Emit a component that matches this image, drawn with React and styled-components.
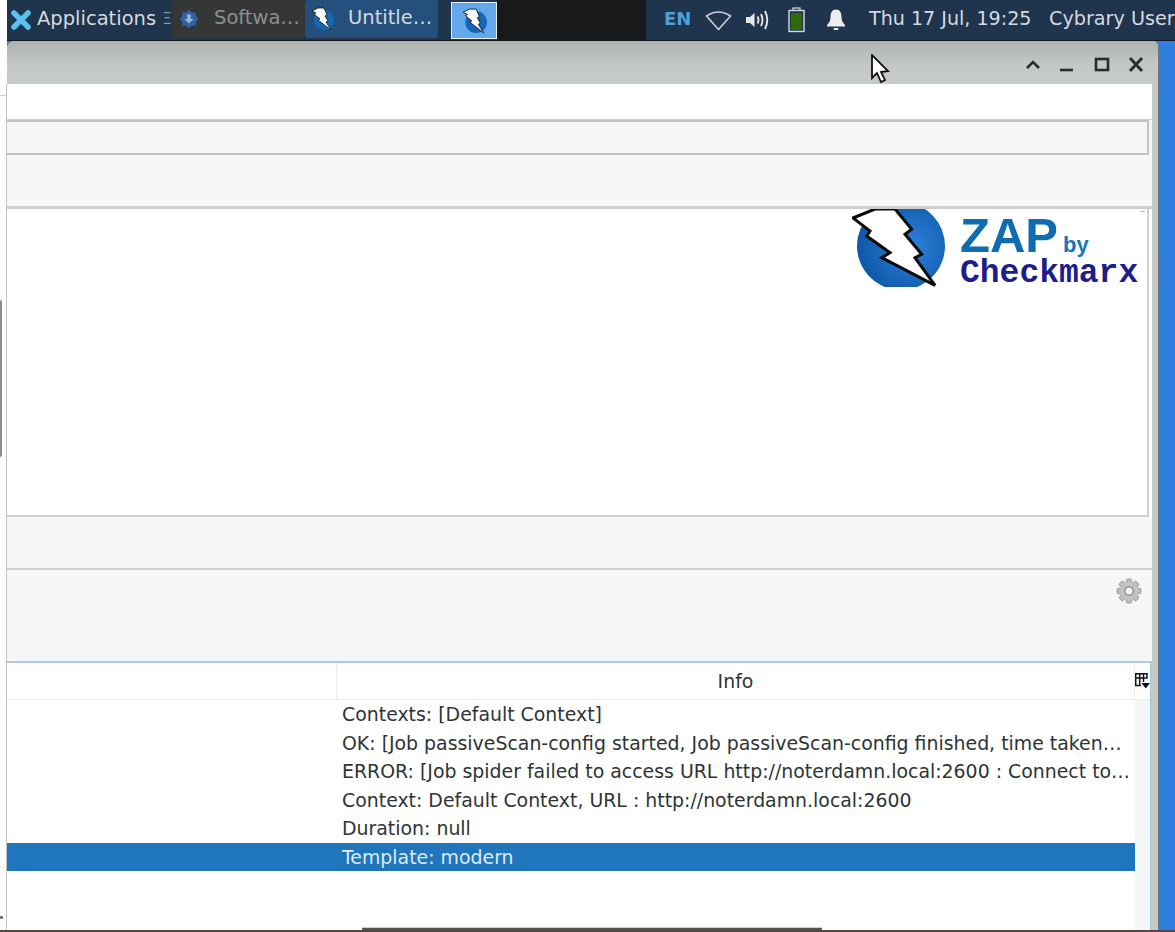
import React from 'react'
import styled, {createGlobalStyle} from 'styled-components'

const Global = createGlobalStyle`
  html, body {
    margin: 0;
    padding: 0;
    height: 100%;
    overflow: hidden;
    background: #2f7fe0;
    font-family: "DejaVu Sans", sans-serif;
  }
  #root {
    height: 100%;
  }
`

const Screen = styled.div`
  width: 1175px;
  height: 932px;
  display: flex;
  background: #2f7fe0;
  overflow: hidden;
  position: relative;
`

const Gutter = styled.div`
  width: 7px;
  flex: none;
  display: flex;
  flex-direction: column;
  background: #fff;
  position: relative;
`

const GutterTop = styled.div`
  height: 84px;
  flex: none;
`

const GutterBody = styled.div`
  flex: 1;
  background: #fdfdfd;
  border-right: 1px solid #c3c3c3;
`

const GutterLine = styled.div`
  height: 1px;
  margin-top: 11px;
  background: #cfcfcf;
`

const GutterHandle = styled.div`
  position: absolute;
  left: 0;
  top: 300px;
  width: 2px;
  height: 157px;
  background: #8b8b8b;
  border-radius: 0 2px 2px 0;
`

const GutterMark = styled.div`
  position: absolute;
  left: 0;
  top: 916px;
  width: 3px;
  height: 3px;
  background: #777;
`

const Main = styled.div`
  flex: 1;
  min-width: 0;
  display: flex;
  flex-direction: column;
`

const Panel = styled.div`
  height: 40px;
  flex: none;
  display: flex;
  align-items: center;
  background: #1f344d;
  border-bottom: 1px solid #14181d;
  color: #d6dade;
  white-space: nowrap;
  overflow: hidden;
`

const PanelLabel = styled.span`
  font-size: 19.5px;
  padding-bottom: 3px;
`

const AppMenu = styled.div`
  display: flex;
  flex: none;
  align-items: center;
  gap: 5px;
  width: 162px;
  padding-left: 3px;
`

const Separator = styled(PanelLabel)`
  color: #8a96a3;
  font-size: 15px;
  margin-left: 1px;
`

const Task = styled.div`
  width: 133px;
  height: 38px;
  flex: none;
  align-self: flex-start;
  display: flex;
  align-items: center;
  gap: 14px;
  padding-left: ${({$pad}) => $pad}px;
  box-sizing: border-box;
  background: ${({$active}) => ($active ? '#25507d' : '#353737')};
  color: ${({$active}) => ($active ? '#d6dade' : '#8b8f91')};
  border-radius: 3px;
`

const Pager = styled.div`
  width: 46px;
  height: 37px;
  flex: none;
  margin-left: 13px;
  align-self: flex-start;
  margin-top: 2px;
  box-sizing: border-box;
  border: 1px solid #e8f0f8;
  background: #62a8ea;
  display: flex;
  align-items: center;
  justify-content: center;
`

const BlackGap = styled.div`
  width: 149px;
  flex: none;
  height: 100%;
  background: #17191b;
`

const Tray = styled.div`
  display: flex;
  flex: none;
  align-items: center;
  height: 100%;
  padding-left: 18px;
`

const Lang = styled(PanelLabel)`
  color: #4f9fd8;
  font-weight: 700;
  font-size: 18px;
  width: 41px;
`

const TrayIcon = styled.div`
  width: ${({$width}) => $width}px;
  display: flex;
  align-items: center;
  justify-content: flex-start;
`

const Clock = styled(PanelLabel)`
  margin-left: 19px;
  width: 180px;
  font-size: 19.1px;
`

const User = styled(PanelLabel)`
  font-size: 19.2px;
`

const Desktop = styled.div`
  flex: 1;
  display: flex;
  min-height: 0;
`

const Window = styled.div`
  width: 1151px;
  height: 100%;
  display: flex;
  flex-direction: column;
  background: #c6cac6;
  border-top-left-radius: 8px;
  border-top-right-radius: 6px;
  border-right: 1px solid #70757a;
`

const TitleBar = styled.div`
  height: 43px;
  flex: none;
  box-sizing: border-box;
  display: flex;
  align-items: center;
  justify-content: flex-end;
  gap: 14.5px;
  padding: 5px 12px 0 0;
  border-top-left-radius: 8px;
  border-top-right-radius: 6px;
  background: linear-gradient(#aeb2ae, #c4c8c4 55%, #c7cbc7);
`

const WinButton = styled.svg`
  width: 20px;
  height: 20px;
  display: block;
`

const Content = styled.div`
  flex: 1;
  min-height: 0;
  margin-right: 6px;
  display: flex;
  flex-direction: column;
  background: #f6f6f6;
`

const WhiteBand = styled.div`
  height: 35px;
  flex: none;
  background: #fff;
  border-bottom: 1px solid #cfcfcf;
`

const InputField = styled.div`
  height: 31px;
  flex: none;
  margin-right: 3px;
  background: #f6f6f6;
  border: 2px solid #c2c2c2;
  border-left: none;
`

const GreyBand = styled.div`
  height: ${({$height}) => $height}px;
  flex: none;
  background: #f6f6f6;
  border-bottom: ${({$line}) => $line}px solid #cfcfcf;
`

const Banner = styled.div`
  height: 306px;
  flex: none;
  background: #fff;
  border-right: 2px solid #cfd2cf;
  margin-right: 3px;
  box-shadow: 3px 0 0 #fff;
  border-bottom: 2px solid #cfcfcf;
  display: flex;
  justify-content: flex-end;
  align-items: flex-start;
  padding-right: 7px;
  position: relative;
`

const ScrollDash = styled.div`
  position: absolute;
  right: 2px;
  top: 2px;
  width: 5px;
  height: 1px;
  background: #b5b5b5;
`

const LogoBox = styled.div`
  display: flex;
  gap: 12px;
  height: 78px;
`

const LogoText = styled.div`
  display: flex;
  flex-direction: column;
  padding-top: 2px;
  font-family: "Liberation Sans", sans-serif;
  font-weight: 700;
  width: 180px;
`

const ZapWord = styled.div`
  display: flex;
  align-items: baseline;
  color: #0e6db0;
  font-size: 49px;
  line-height: 48px;
  height: 48px;
  gap: 5px;

  span {
    font-size: 22px;
    line-height: 24px;
    color: #1478bb;
  }
`

const MakerWord = styled.div`
  margin-top: 2px;
  color: #1d1d8c;
  font-family: "Liberation Mono", monospace;
  font-size: 33px;
  line-height: 26px;
`

const SettingsBand = styled.div`
  height: 91px;
  flex: none;
  box-sizing: border-box;
  display: flex;
  justify-content: flex-end;
  align-items: flex-start;
  padding: 8px 10px 0 0;
  background: #f6f6f6;
`

const TableWrap = styled.div`
  flex: 1;
  min-height: 0;
  display: flex;
  flex-direction: column;
  background: #fff;
  border-top: 2px solid #a9cbe4;
  border-right: 2px solid #a9cbe4;
  font-size: 18.9px;
  color: #2e3436;
`

const TableHead = styled.div`
  height: 37px;
  flex: none;
  box-sizing: border-box;
  display: grid;
  grid-template-columns: 330px 1fr 15px;
  border-bottom: 1px solid #ececec;
`

const HeadCell = styled.div`
  display: flex;
  align-items: center;
  justify-content: center;
  border-right: 1px solid #ececec;
`

const HeadCorner = styled.div`
  display: flex;
  align-items: center;
  justify-content: center;
`

const TableRows = styled.div`
  flex: 1;
  min-height: 0;
  display: grid;
  grid-template-columns: 1fr 15px;
`

const RowList = styled.div`
  display: flex;
  flex-direction: column;
`

const Row = styled.div`
  height: 28.5px;
  flex: none;
  box-sizing: border-box;
  padding-left: 335px;
  line-height: 28px;
  white-space: nowrap;
  background: ${({$selected}) => ($selected ? '#2076bd' : 'transparent')};
  color: ${({$selected}) => ($selected ? '#dcebf7' : '#2e3436')};
`

const ScrollTrack = styled.div`
  background: #f4f8f5;
`

const BottomBar = styled.div`
  position: absolute;
  left: 0;
  right: 0;
  bottom: 0;
  height: 2px;
  background: #5e4146;
`

const BottomHandle = styled.div`
  position: absolute;
  left: 362px;
  bottom: 2px;
  width: 460px;
  height: 2px;
  background: #555;
  border-top: 1px solid #cfcfcf;
`

const Cursor = styled.svg`
  position: absolute;
  left: 870px;
  top: 54px;
  width: 21px;
  height: 31px;
`

const XfceLogo = () => (
  <svg width="22" height="22" viewBox="0 0 22 22" fill="none" stroke="#5cc0ee" strokeWidth="5.500" strokeLinecap="round">
    <path d="M4 4 L18 18 M18 4 L4 18" />
  </svg>
)

const ZapBadge = ({size}) => (
  <svg width={size} height={size} viewBox="0 0 24 24">
    <circle cx="14" cy="13" r="10" fill="#1467b5" />
    <path
      d="M2 4 L8 1 L14 1 L17 8 L15 9 L18 14 L16 15 L21 23 L8 13 L10 12 L4 7 L6 6 Z"
      fill="#fff"
      stroke="#111"
      strokeWidth="0.8"
    />
  </svg>
)

const SoftwareIcon = () => (
  <svg width="22" height="22" viewBox="0 0 24 24">
    <path
      d="M12 2 L15 5 L19 4.500 L19.500 9 L22 12 L19.500 15 L19 19.500 L15 19 L12 22 L9 19 L5 19.500 L4.500 15 L2 12 L4.500 9 L5 4.500 L9 5 Z"
      fill="#2f63a8"
    />
    <path d="M10 7 H14 V12 H17 L12 17 L7 12 H10 Z" fill="#9fb4cc" />
  </svg>
)

const WifiIcon = () => (
  <svg width="27" height="22" viewBox="0 0 27 22" fill="none">
    <path d="M13.500 20.500 L1.500 7 Q13.500 -1 25.500 7 Z" stroke="#c9cdd1" strokeWidth="1.700" strokeLinejoin="round" />
  </svg>
)

const VolumeIcon = () => (
  <svg width="25" height="22" viewBox="0 0 25 22" fill="none">
    <path d="M1 8 H5 L9.500 4 V18 L5 14 H1 Z" fill="#e4e6e8" />
    <path d="M12.500 7.500 Q14.500 11 12.500 14.500 M16 5 Q19 11 16 17 M20 2 Q24.500 11 20 20" stroke="#e4e6e8" strokeWidth="1.900" />
  </svg>
)

const BatteryIcon = () => (
  <svg width="17" height="26" viewBox="0 0 17 26">
    <rect x="5" y="1" width="7" height="3" fill="none" stroke="#d8dcdc" strokeWidth="1.200" />
    <rect x="1" y="3.500" width="15" height="21" fill="#1f344d" stroke="#d8dcdc" strokeWidth="1.400" />
    <rect x="3" y="6" width="11" height="17" fill="#2f6a05" />
  </svg>
)

const BellIcon = () => (
  <svg width="20" height="24" viewBox="0 0 20 24">
    <path d="M10 1.500 C14 1.500 15.500 5 15.500 9 C15.500 13 17 15 19 17 V18.500 H1 V17 C3 15 4.500 13 4.500 9 C4.500 5 6 1.500 10 1.500 Z" fill="#eceeee" />
    <rect x="7.500" y="20" width="5" height="2" rx="1" fill="#eceeee" />
  </svg>
)

const GearIcon = () => (
  <svg width="26" height="26" viewBox="0 0 26 26">
    {[0, 45, 90, 135, 180, 225, 270, 315].map((angle) => (
      <rect
        key={angle}
        x="10.200"
        y="1"
        width="5.600"
        height="6"
        rx="1.500"
        fill="#bcbcbc"
        stroke="#939393"
        strokeWidth="0.800"
        transform={`rotate(${angle} 13 13)`}
      />
    ))}
    <circle cx="13" cy="13" r="8.800" fill="#c4c4c4" />
    <circle cx="13" cy="13" r="4.200" fill="#f4f4f4" stroke="#8a8a8a" strokeWidth="1.300" />
  </svg>
)

const ColumnPicker = () => (
  <svg width="15" height="16" viewBox="0 0 15 16" fill="none">
    <path d="M0.700 0.800 H12 V5 H0.700 Z M0.700 5 V12.500 H6 M4.700 0.800 V12.500 M8.500 0.800 V9" stroke="#111" strokeWidth="1.500" />
    <path d="M6.500 10 H15 L10.700 15.500 Z" fill="#111" />
  </svg>
)

const BigBolt = () => (
  <svg width="96" height="78" viewBox="0 0 96 78">
    <defs>
      <radialGradient id="ball" cx="62%" cy="50%" r="60%">
        <stop offset="0%" stopColor="#2e7fdc" />
        <stop offset="100%" stopColor="#0e5aa8" />
      </radialGradient>
    </defs>
    <circle cx="49" cy="37" r="44" fill="url(#ball)" />
    <path
      d="M1 9 L23 0 L43 0 L59.700 20.300 L53 25.300 L69.700 45.300 L63 48.700 L83 76.300 L29.700 48.700 L38 43.700 L14.700 27 L18 22 Z"
      fill="#fff"
      stroke="#0c0c0c"
      strokeWidth="3"
    />
  </svg>
)

const rows = [
  'Contexts: [Default Context]',
  'OK: [Job passiveScan-config started, Job passiveScan-config finished, time taken…',
  'ERROR: [Job spider failed to access URL http://noterdamn.local:2600 : Connect to…',
  'Context: Default Context, URL : http://noterdamn.local:2600',
  'Duration: null',
  'Template: modern',
]

const App = () => {
  return (
    <Screen>
      <Global />
      <Gutter>
        <GutterTop />
        <GutterBody>
          <GutterLine />
        </GutterBody>
        <GutterHandle />
        <GutterMark />
      </Gutter>
      <Main>
        <Panel>
          <AppMenu>
            <XfceLogo />
            <PanelLabel>Applications</PanelLabel>
            <Separator>Ξ</Separator>
          </AppMenu>
          <Task $pad={6}>
            <SoftwareIcon />
            <PanelLabel>Softwa…</PanelLabel>
          </Task>
          <Task $pad={5} $active>
            <ZapBadge size={24} />
            <PanelLabel>Untitle…</PanelLabel>
          </Task>
          <Pager>
            <ZapBadge size={26} />
          </Pager>
          <BlackGap />
          <Tray>
            <Lang>EN</Lang>
            <TrayIcon $width={40}><WifiIcon /></TrayIcon>
            <TrayIcon $width={43}><VolumeIcon /></TrayIcon>
            <TrayIcon $width={38}><BatteryIcon /></TrayIcon>
            <TrayIcon $width={24}><BellIcon /></TrayIcon>
            <Clock>Thu 17 Jul, 19:25</Clock>
            <User>Cybrary User</User>
          </Tray>
        </Panel>
        <Desktop>
          <Window>
            <TitleBar>
              <WinButton viewBox="0 0 20 20" fill="none" stroke="#2b2b2b" strokeWidth="2.600">
                <path d="M4 13 L10 7 L16 13" />
              </WinButton>
              <WinButton viewBox="0 0 20 20" fill="none" stroke="#2b2b2b" strokeWidth="2.600">
                <path d="M3 15 H16" />
              </WinButton>
              <WinButton viewBox="0 0 20 20" fill="none" stroke="#2b2b2b" strokeWidth="2.600">
                <rect x="4" y="4" width="12" height="11" />
              </WinButton>
              <WinButton viewBox="0 0 20 20" fill="none" stroke="#2b2b2b" strokeWidth="2.800">
                <path d="M4 3 L16 16 M16 3 L4 16" />
              </WinButton>
            </TitleBar>
            <Content>
              <WhiteBand />
              <InputField />
              <GreyBand $height={51} $line={3} />
              <Banner>
                <ScrollDash />
                <LogoBox>
                  <BigBolt />
                  <LogoText>
                    <ZapWord>ZAP<span>by</span></ZapWord>
                    <MakerWord>Checkmarx</MakerWord>
                  </LogoText>
                </LogoBox>
              </Banner>
              <GreyBand $height={51} $line={2} />
              <SettingsBand>
                <GearIcon />
              </SettingsBand>
              <TableWrap>
                <TableHead>
                  <HeadCell />
                  <HeadCell>Info</HeadCell>
                  <HeadCorner><ColumnPicker /></HeadCorner>
                </TableHead>
                <TableRows>
                  <RowList>
                    {rows.map((row, i) => (
                      <Row key={row} $selected={i === 5}>{row}</Row>
                    ))}
                  </RowList>
                  <ScrollTrack />
                </TableRows>
              </TableWrap>
            </Content>
          </Window>
        </Desktop>
      </Main>
      <BottomBar />
      <BottomHandle />
      <Cursor viewBox="0 0 21 31">
        <path d="M2 1 L2 24 L7 19 L11 28 L15 26 L11 18 L18 17 Z" fill="#fff" stroke="#111" strokeWidth="1.800" />
      </Cursor>
    </Screen>
  )
}

export default App
